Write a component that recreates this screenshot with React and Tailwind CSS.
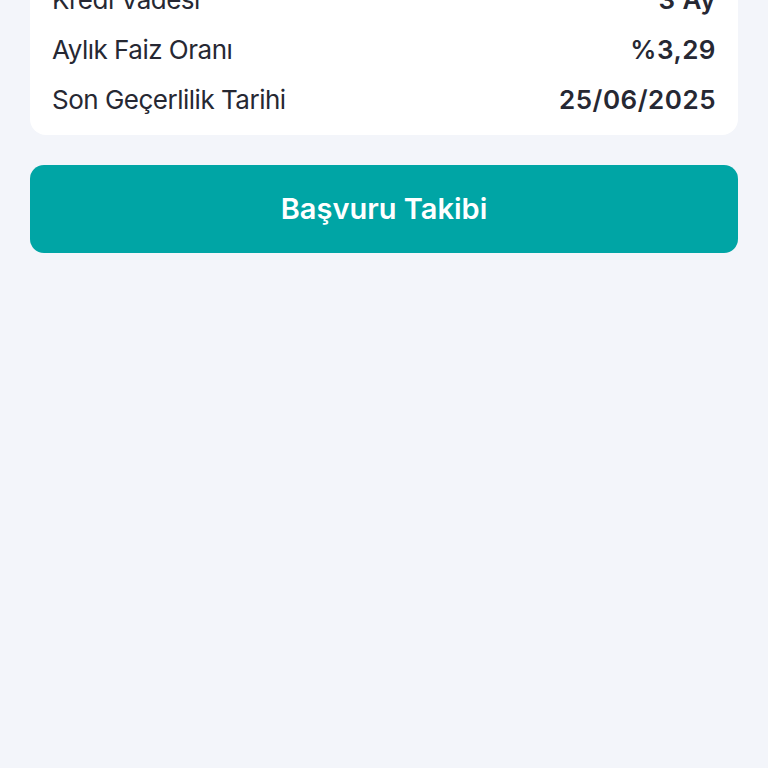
import React from 'react';

const rows = [
  { label: 'Kredi Vadesi', value: '3 Ay' },
  { label: 'Aylık Faiz Oranı', value: '%3,29' },
  { label: 'Son Geçerlilik Tarihi', value: '25/06/2025' },
];

const App = () => {
  return (
    <div
      className="h-[768px] overflow-hidden bg-[#f3f5fa] px-[30px]"
      style={{ fontFamily: 'Inter, "Noto Sans", sans-serif' }}
    >
      {/* Offer details card (scrolled, top cut off) */}
      <div className="-mt-[26px] rounded-2xl bg-white px-[22px] pb-[11px]">
        {rows.map((row) => (
          <div key={row.label} className="flex h-[50px] items-center justify-between">
            <span className="text-[26px] tracking-[-0.5px] text-[#262833]">{row.label}</span>
            <span className="text-[26px] font-semibold tracking-[0.5px] text-[#262833]">{row.value}</span>
          </div>
        ))}
      </div>

      {/* Action */}
      <button className="mt-[30px] flex h-[88px] w-full items-center justify-center rounded-[14px] bg-[#00a5a5] text-[29px] font-semibold text-white">
        Başvuru Takibi
      </button>
    </div>
  );
};

export default App;
